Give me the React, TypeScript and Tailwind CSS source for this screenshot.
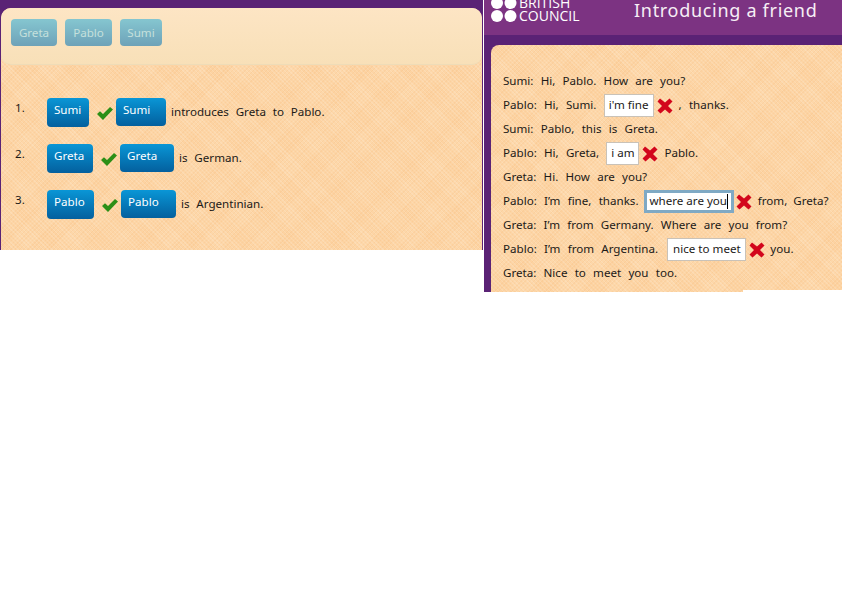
const hatch =
  'bg-[#fdd7a9] bg-[repeating-linear-gradient(45deg,rgba(255,255,255,0.14)_0px,rgba(255,255,255,0.14)_1px,transparent_1px,transparent_3px),repeating-linear-gradient(-45deg,rgba(240,170,100,0.14)_0px,rgba(240,170,100,0.14)_1px,transparent_1px,transparent_3px),repeating-linear-gradient(45deg,rgba(250,190,125,0.09)_0px,rgba(250,190,125,0.09)_17px,transparent_17px,transparent_34px),repeating-linear-gradient(-45deg,rgba(250,190,125,0.09)_0px,rgba(250,190,125,0.09)_17px,transparent_17px,transparent_34px)]'

function Check() {
  return (
    <svg width="16" height="13" viewBox="0 0 16 13" className="shrink-0">
      <path d="M0 7 L3 4.2 L6 7 L13 0 L16 2.6 L6 13 Z" fill="#2c8f17" />
    </svg>
  )
}

function Cross() {
  return (
    <svg width="16" height="16" viewBox="0 0 16 16" className="mt-[2px] shrink-0">
      <path d="M3 0.5 L8 4.5 L12.5 0.5 L15.5 3.5 L11 8 L15.5 12.5 L12.5 15.5 L8 11.5 L3.5 15.5 L0.5 12.5 L5 8 L0.5 3.5 Z" fill="#d2061c" />
    </svg>
  )
}

function Chip({ label, w, h = 'h-[29px]' }: { label: string; w: string; h?: string }) {
  return (
    <div className={`${w} ${h} rounded-[4px] bg-gradient-to-b from-[#0a96d6] to-[#04609e] pl-[7px] pt-[4px] text-[11.6px] leading-[16px] text-white`}>
      {label}
    </div>
  )
}

function Faded({ label, w }: { label: string; w: string }) {
  return (
    <div className={`${w} h-[27px] rounded-[4px] bg-gradient-to-b from-[#85c6d0] to-[#6ea2b8] pt-[6px] text-center text-[11.6px] leading-[16px] text-[#c5e0dc]`}>
      {label}
    </div>
  )
}

function Row({ n, first, second, w1, w2, text }: { n: string; first: string; second: string; w1: string; w2: string; text: string }) {
  return (
    <div className="flex h-[46px] items-start">
      <div className="w-[46px] pl-[14px] pt-[2px] text-[11.6px] leading-[16px]">{n}</div>
      <Chip label={first} w={w1} />
      <div className="ml-[8px] mr-[3px] mt-[9px]"><Check /></div>
      <Chip label={second} w={w2} h="h-[28px]" />
      <div className="ml-[5px] mt-[6px] text-[11.6px] leading-[16px] [word-spacing:3.8px]">{text}</div>
    </div>
  )
}

function Answer({ text, w, focus }: { text: string; w: string; focus?: boolean }) {
  return (
    <span
      className={`${w} inline-flex h-[23px] shrink-0 items-center justify-center whitespace-nowrap bg-white text-[11.6px] [word-spacing:0px] ${
        focus ? 'border-[3px] border-[#7fa9c4]' : 'border border-[#c9c2b8]'
      }`}
    >
      {text}
      {focus && <span className="h-[15px] w-px bg-black" />}
    </span>
  )
}

function Line({ children }: { children: React.ReactNode }) {
  return <div className="flex h-[24px] items-center whitespace-pre [word-spacing:4.2px]">{children}</div>
}

export default function App() {
  return (
    <div className="flex h-[610px] w-[842px] items-start overflow-hidden bg-white font-['Noto_Sans',sans-serif] text-[#1c1a18]">
      {/* left panel */}
      <div className="h-[250px] w-[483px] shrink-0 bg-[#5a2275] pl-[1px] pr-[1px] pt-[8px]">
        <div className={`h-[242px] rounded-t-[10px] ${hatch}`}>
          <div className="flex h-[57px] gap-[8px] rounded-[10px] border-b border-[#eedcb8] bg-gradient-to-b from-[#fde5c4] to-[#f8e0b8] pl-[10px] pt-[11px]">
            <Faded label="Greta" w="w-[46px]" />
            <Faded label="Pablo" w="w-[47px]" />
            <Faded label="Sumi" w="w-[42px]" />
          </div>
          <div className="pt-[33px]">
            <Row n="1." first="Sumi" second="Sumi" w1="w-[42px]" w2="w-[50px]" text="introduces Greta to Pablo." />
            <Row n="2." first="Greta" second="Greta" w1="w-[46px]" w2="w-[54px]" text="is German." />
            <Row n="3." first="Pablo" second="Pablo" w1="w-[47px]" w2="w-[55px]" text="is Argentinian." />
          </div>
        </div>
      </div>

      {/* right panel */}
      <div className="relative ml-[1px] flex h-[292px] w-[358px] shrink-0 flex-col bg-[#5a2275]">
        <div className="flex h-[35px] shrink-0 bg-[#7c3382]">
          <div className="relative h-[35px] w-[150px] overflow-hidden">
            <svg width="27" height="30" viewBox="0 0 27 30" className="absolute left-[7px] top-[-5px]" fill="#fff">
              <circle cx="6" cy="8" r="6" />
              <circle cx="19.5" cy="8" r="6" />
              <circle cx="6" cy="21" r="6" />
              <circle cx="19.5" cy="21" r="6" />
            </svg>
            <div className="absolute left-[35px] top-[-4px] font-['Open_Sans',sans-serif] text-[14px] leading-[14px] text-white">BRITISH</div>
            <div className="absolute left-[35px] top-[9px] font-['Open_Sans',sans-serif] text-[14px] leading-[14px] text-white">COUNCIL</div>
          </div>
          <div className="-mt-[2px] text-[18px] leading-[24px] tracking-[0.7px] text-[#f6eef5]">Introducing a friend</div>
        </div>
        <div className="flex-1 pl-[7px] pt-[10px]">
          <div className={`h-[247px] rounded-tl-[8px] pl-[12px] pt-[24px] text-[11.6px] ${hatch}`}>
            <Line>Sumi: Hi, Pablo. How are you?</Line>
            <Line>
              Pablo: Hi, Sumi. <Answer text="i'm fine" w="w-[50px]" /><span className="ml-[3px]"><Cross /></span><span className="ml-[6px]">, thanks.</span>
            </Line>
            <Line>Sumi: Pablo, this is Greta.</Line>
            <Line>
              Pablo: Hi, Greta, <Answer text="i am" w="w-[33px]" /><span className="ml-[3px]"><Cross /></span><span className="ml-[6px]">Pablo.</span>
            </Line>
            <Line>Greta: Hi. How are you?</Line>
            <Line>
              Pablo: I’m fine, thanks. <span className="-ml-[2px]" /><Answer text="where are you" w="w-[90px]" focus /><span className="ml-[2px]"><Cross /></span><span className="ml-[6px] [word-spacing:3px]">from, Greta?</span>
            </Line>
            <Line>Greta: I’m from Germany. Where are you from?</Line>
            <Line>
              Pablo: I’m from Argentina. <span className="w-[2px]" /><Answer text="nice to meet" w="w-[79px]" /><span className="ml-[3px]"><Cross /></span><span className="ml-[5px]">you.</span>
            </Line>
            <Line>Greta: Nice to meet you too.</Line>
          </div>
        </div>
        {/* notch of white at the bottom right */}
        <div className="absolute bottom-0 right-0 h-[2px] w-[99px] bg-white" />
      </div>
    </div>
  )
}
